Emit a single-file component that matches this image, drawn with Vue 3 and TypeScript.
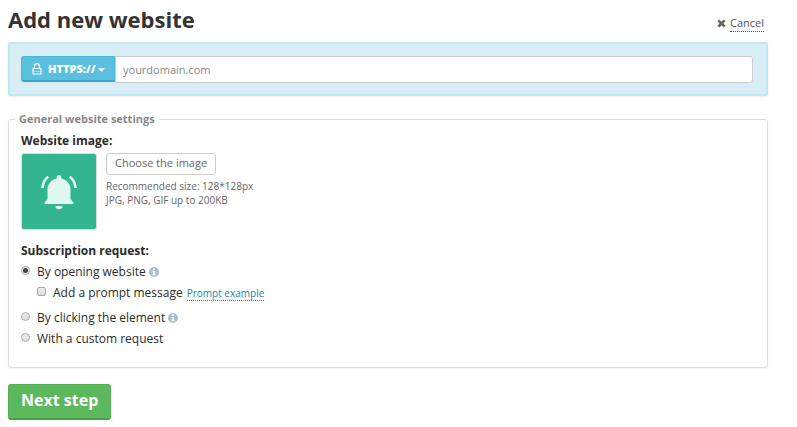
<script setup lang="ts">
import { ref } from 'vue'

type RequestMode = 'open' | 'click' | 'custom'

const protocol = ref<string>('https')
const domain = ref<string>('')
const mode = ref<RequestMode>('open')
const withPrompt = ref<boolean>(false)
</script>

<template>
  <main class="page">
    <header class="head">
      <h1 class="title">Add new website</h1>
      <div class="cancel">
        <svg class="cross" viewBox="0 0 8 8" aria-hidden="true">
          <path d="M1.2 1.2 6.8 6.8M6.8 1.2 1.2 6.8" />
        </svg>
        <a href="#cancel" class="cancel-link">Cancel</a>
      </div>
    </header>

    <form @submit.prevent>
      <div class="address">
        <div class="protocol">
          <svg class="lock" viewBox="0 0 10 12" aria-hidden="true">
            <path d="M1.500 5.500h7q.5 0 .5.500v4.500q0 .5-.5.500h-7q-.5 0-.5-.5V6q0-.5.500-.5zM2.500 5.500V3a2.500 2.400 0 0 1 5 0v2.500" />
            <path class="lock-line" d="M1 8.500h8" />
          </svg>
          <select v-model="protocol" class="protocol-select" aria-label="Protocol">
            <option value="https">HTTPS://</option>
            <option value="http">HTTP://</option>
          </select>
          <svg class="caret" viewBox="0 0 8 4" aria-hidden="true"><path d="M0 0h8L4 4z" /></svg>
        </div>
        <input v-model="domain" class="domain" type="text" placeholder="yourdomain.com" aria-label="Domain" />
      </div>

      <fieldset class="settings">
        <legend class="legend">General website settings</legend>

        <h2 class="label">Website image:</h2>
        <div class="image-row">
          <div class="thumb">
            <svg class="bell" viewBox="0 0 38 36" aria-hidden="true">
              <path
                class="bell-body"
                d="M19 1a2.300 2.300 0 0 1 2.300 2.500v.9c5.600 1.200 9.200 5.500 9.200 11.100v9.500l3 3.600V30h-29v-1.400l3-3.600v-9.500c0-5.600 3.600-9.900 9.200-11.100v-.9A2.300 2.300 0 0 1 19 1zM15.500 32h7a3.500 3.200 0 0 1-7 0z"
              />
              <path class="bell-wave" d="M8.300 2.700C5 5 2.800 9 2.500 14M29.700 2.700C33 5 35.200 9 35.500 14" />
            </svg>
          </div>
          <div class="image-side">
            <button type="button" class="choose">Choose the image</button>
            <p class="hint">Recommended size: 128*128px<br />JPG, PNG, GIF up to 200KB</p>
          </div>
        </div>

        <h2 id="request-label" class="label">Subscription request:</h2>
        <div class="options" role="radiogroup" aria-labelledby="request-label">
          <div class="option">
            <input id="mode-open" v-model="mode" class="tick radio" type="radio" name="mode" value="open" />
            <label for="mode-open">By opening website</label>
            <svg class="info" viewBox="0 0 10 10" aria-hidden="true">
              <circle cx="5" cy="5" r="5" />
              <path d="M4 1.500h2v1.500H4zM3.400 4h2.600v3.200h.8v1.100H3.400V7.200h.9V5.100h-.9z" />
            </svg>
          </div>
          <div class="option nested">
            <input id="prompt" v-model="withPrompt" class="tick" type="checkbox" />
            <label for="prompt">Add a prompt message</label>
            <a href="#example" class="example">Prompt example</a>
          </div>
          <div class="option">
            <input id="mode-click" v-model="mode" class="tick radio" type="radio" name="mode" value="click" />
            <label for="mode-click">By clicking the element</label>
            <svg class="info" viewBox="0 0 10 10" aria-hidden="true">
              <circle cx="5" cy="5" r="5" />
              <path d="M4 1.500h2v1.500H4zM3.400 4h2.600v3.200h.8v1.100H3.400V7.200h.9V5.100h-.9z" />
            </svg>
          </div>
          <div class="option">
            <input id="mode-custom" v-model="mode" class="tick radio" type="radio" name="mode" value="custom" />
            <label for="mode-custom">With a custom request</label>
          </div>
        </div>
      </fieldset>

      <button type="submit" class="next">Next step</button>
    </form>
  </main>
</template>

<style>
body {
  background: #fff;
}
</style>

<style scoped>
.page {
  padding: 4px 29px 7px 8px;
  font-family: 'Open Sans', 'Noto Sans', sans-serif;
  font-size: 12px;
  line-height: 20px;
  color: #2b2b2b;
}
.page * {
  box-sizing: border-box;
}
.head {
  display: flex;
  justify-content: space-between;
  align-items: flex-end;
  height: 38px;
  padding-bottom: 6px;
}
.title {
  margin: 0;
  font-size: 22px;
  line-height: 34px;
  font-weight: 700;
  color: #333;
}
.cancel {
  display: flex;
  align-items: center;
  gap: 4px;
  padding: 0 4px 4px 0;
}
.cross {
  width: 9px;
  height: 9px;
}
.cross path {
  stroke: #666;
  stroke-width: 2.4;
}
.cancel-link {
  color: #555;
  font-size: 11px;
  line-height: 16px;
  text-decoration: none;
  border-bottom: 1px dotted #555;
}
.address {
  display: flex;
  padding: 12px 13px 11px 11px;
  border: 2px solid #bce8f1;
  border-radius: 3px;
  background: #d9edf7;
  box-shadow: 0 1px 2px rgba(0, 0, 0, 0.08);
}
.protocol {
  position: relative;
  width: 94px;
  height: 26px;
}
.protocol-select {
  appearance: none;
  display: block;
  width: 100%;
  height: 26px;
  margin: 0;
  padding: 0 14px 0 26px;
  border: 1px solid #46b8da;
  border-bottom: 2px solid #3da3c4;
  border-radius: 3px 0 0 3px;
  background: #5bc0de;
  color: #fff;
  font-family: inherit;
  font-size: 11px;
  font-weight: 800;
}
.lock,
.caret {
  position: absolute;
  pointer-events: none;
}
.lock {
  left: 11px;
  top: 7px;
  width: 10px;
  height: 12px;
}
.lock path {
  fill: none;
  stroke: #fff;
  stroke-width: 1.2;
}
.lock .lock-line {
  stroke-width: 1;
  stroke-opacity: 0.4;
}
.caret {
  right: 10px;
  top: 12px;
  width: 7px;
  height: 4px;
  fill: #fff;
}
.domain {
  flex: 1;
  min-width: 0;
  height: 27px;
  margin: 0;
  padding: 0 7px;
  border: 1px solid #ccc;
  border-radius: 0 3px 3px 0;
  background: #fff;
  font-family: inherit;
  font-size: 11px;
  color: #333;
}
.domain::placeholder {
  color: #888;
  opacity: 1;
}
.settings {
  min-width: 0;
  margin: 14px 0 16px;
  padding: 3px 12px 18px;
  border: 1px solid #ddd;
  border-radius: 3px;
  box-shadow: 0 1px 2px rgba(0, 0, 0, 0.05);
}
.legend {
  margin-left: -6px;
  padding: 0 4px;
  font-size: 11px;
  line-height: 18px;
  font-weight: 700;
  color: #888;
}
.label {
  margin: 0;
  font-size: 12px;
  line-height: 20px;
  font-weight: 700;
}
.image-row {
  display: flex;
  gap: 9px;
  margin: 2px 0 11px;
}
.thumb {
  display: flex;
  align-items: center;
  justify-content: center;
  width: 76px;
  height: 77px;
  border: 1px solid #dcdcdc;
  border-radius: 3px;
  background: #33b58f;
}
.bell {
  width: 38px;
  height: 36px;
}
.bell-body {
  fill: #dff7ef;
}
.bell-wave {
  fill: none;
  stroke: #dff7ef;
  stroke-width: 2.6;
}
.choose {
  display: block;
  height: 22px;
  padding: 0 8px 2px;
  border: 1px solid #ccc;
  border-radius: 3px;
  background: #fff;
  font-family: inherit;
  font-size: 11px;
  line-height: 18px;
  color: #666;
}
.hint {
  margin: 4px 0 0;
  font-size: 10px;
  line-height: 14px;
  color: #666;
}
.options {
  display: flex;
  flex-direction: column;
  gap: 1px;
  margin-top: 1px;
}
.option {
  display: flex;
  align-items: center;
}
.nested {
  padding: 0 0 4px 16px;
}
.tick {
  appearance: none;
  flex: none;
  width: 9px;
  height: 9px;
  margin: 0 7px 3px 0;
  border: 1px solid #aaa;
  border-radius: 2px;
  background: linear-gradient(#eee, #ddd);
}
.radio {
  border-radius: 50%;
}
.radio:checked {
  background: radial-gradient(circle, #444 0 2px, #e6e6e6 3px);
}
.tick[type='checkbox']:checked {
  background: #666;
}
.info {
  width: 10px;
  height: 10px;
  margin-left: 3px;
  fill: #a5bfd3;
}
.info path {
  fill: #fff;
}
.example {
  margin-left: 4px;
  font-size: 10px;
  line-height: 14px;
  color: #1b87a5;
  text-decoration: none;
  border-bottom: 1px dotted #1b87a5;
}
.next {
  display: block;
  height: 36px;
  padding: 0 12px 3px;
  border: 1px solid #55b055;
  border-bottom: 2px solid #4ba04b;
  border-radius: 3px;
  background: #5cb85c;
  color: #fff;
  font-family: inherit;
  font-size: 16px;
  font-weight: 700;
  line-height: 22px;
}
</style>
